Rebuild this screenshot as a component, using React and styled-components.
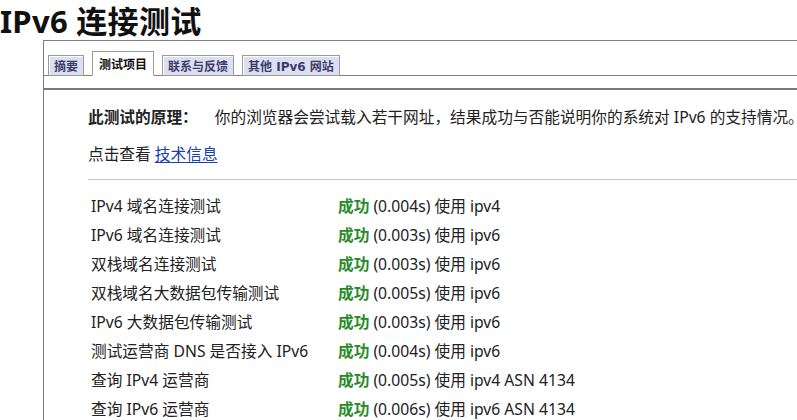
import React from 'react';
import styled, { createGlobalStyle } from 'styled-components';

const GlobalStyle = createGlobalStyle`
    html, body {
        margin: 0;
        padding: 0;
        background: #fff;
        overflow: hidden;
    }
    body {
        font-family: "Noto Sans", "Noto Sans CJK SC", sans-serif;
        color: #222;
    }
`;

const Title = styled.h1`
    margin: 0;
    padding: 2px 0 0 0;
    font-family: "Noto Sans", "Noto Sans CJK SC", sans-serif;
    font-size: 31px;
    font-weight: 700;
    line-height: 38px;
    letter-spacing: 0.3px;
    color: #111;
`;

const Panel = styled.div`
    margin-left: 43px;
    border-top: 1px solid #808080;
    border-left: 1px solid #808080;
    width: 754px;
`;

const TabBar = styled.div`
    display: flex;
    align-items: flex-end;
    gap: 8px;
    padding: 9px 0 0 4px;
    height: 25px;
    border-bottom: 1px solid #808080;
`;

const Tab = styled.div`
    position: relative;
    top: 1px;
    height: ${p => (p.active ? '25px' : '21px')};
    padding: 0 ${p => (p.active ? '6px' : '5px')};
    box-sizing: border-box;
    display: flex;
    align-items: center;
    font-family: "DejaVu Sans", "Noto Sans CJK SC", sans-serif;
    font-size: 12px;
    font-weight: 700;
    color: ${p => (p.active ? '#111' : '#3b3b6e')};
    background: ${p => (p.active ? '#fff' : '#dcdff0')};
    border: 1px solid #9a9a9a;
    border-bottom: ${p => (p.active ? '1px solid #fff' : '1px solid #9a9a9a')};
    box-shadow: inset 1px 1px 0 #fff;
`;

const Rule = styled.div`
    margin-top: 12px;
    border-top: 2px solid #7a7a7a;
`;

const Content = styled.div`
    padding: 16px 0 0 44px;
    font-size: 15.7px;
    line-height: 22px;
`;

const Principle = styled.p`
    margin: 0;
    white-space: nowrap;
    b {
        font-weight: 700;
        margin-right: 17px;
    }
`;

const More = styled.p`
    margin: 15px 0 0 0;
    a {
        color: #1a3fb0;
        text-decoration: underline;
        text-underline-offset: 2px;
    }
`;

const Divider = styled.hr`
    margin: 14px 0 0 0;
    border: none;
    border-top: 1px solid #c8c8c8;
    height: 0;
`;

const Results = styled.div`
    display: grid;
    grid-template-columns: 247px auto;
    grid-auto-rows: 29px;
    padding: 11px 0 0 3px;
    align-items: center;
`;

const Cell = styled.div`
    white-space: nowrap;
`;

const Ok = styled.span`
    color: #2a8a2a;
    font-weight: 700;
    margin-right: 4px;
`;

const tabs = ['摘要', '测试项目', '联系与反馈', '其他 IPv6 网站'];

const results = [
    ['IPv4 域名连接测试', '(0.004s) 使用 ipv4'],
    ['IPv6 域名连接测试', '(0.003s) 使用 ipv6'],
    ['双栈域名连接测试', '(0.003s) 使用 ipv6'],
    ['双栈域名大数据包传输测试', '(0.005s) 使用 ipv6'],
    ['IPv6 大数据包传输测试', '(0.003s) 使用 ipv6'],
    ['测试运营商 DNS 是否接入 IPv6', '(0.004s) 使用 ipv6'],
    ['查询 IPv4 运营商', '(0.005s) 使用 ipv4 ASN 4134'],
    ['查询 IPv6 运营商', '(0.006s) 使用 ipv6 ASN 4134'],
];

function App() {
    return (
        <>
            <GlobalStyle />
            <Title>IPv6 连接测试</Title>
            <Panel>
                <TabBar>
                    {tabs.map((t, i) => (
                        <Tab key={t} active={i === 1 ? 1 : 0}>{t}</Tab>
                    ))}
                </TabBar>
                <Rule />
                <Content>
                    <Principle>
                        <b>此测试的原理：</b>
                        你的浏览器会尝试载入若干网址，结果成功与否能说明你的系统对 IPv6 的支持情况。
                    </Principle>
                    <More>
                        点击查看 <a href="#tech">技术信息</a>
                    </More>
                    <Divider />
                    <Results>
                        {results.map(([name, detail]) => (
                            <React.Fragment key={name}>
                                <Cell>{name}</Cell>
                                <Cell><Ok>成功</Ok>{detail}</Cell>
                            </React.Fragment>
                        ))}
                    </Results>
                </Content>
            </Panel>
        </>
    );
}

export default App;
